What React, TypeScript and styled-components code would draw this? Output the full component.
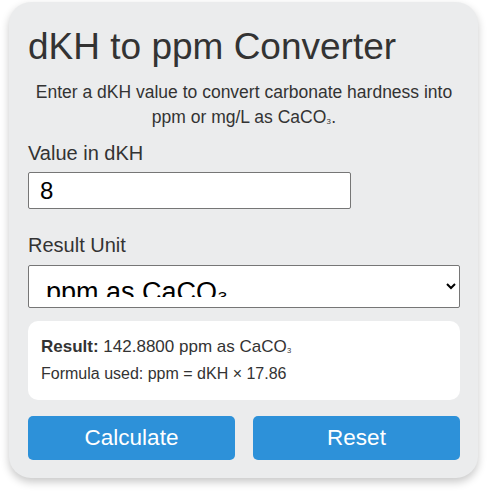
import React, { useState } from 'react';
import styled, { createGlobalStyle } from 'styled-components';

const GlobalStyle = createGlobalStyle`
    body {
        margin: 0;
        background: #ffffff;
        font-family: "Liberation Sans", Arial, sans-serif;
    }
`;

const Page = styled.div`
    padding: 2px 14px 13px 9px;
`;

const Card = styled.div`
    background: #ebeced;
    border-radius: 22px;
    box-shadow: 0 4px 8px rgba(0, 0, 0, 0.22);
    padding: 23px 18px 18px 19px;
    display: flex;
    flex-direction: column;
`;

const Title = styled.h1`
    margin: 0;
    font-size: 37px;
    font-weight: normal;
    color: #333333;
    line-height: 44px;
`;

const Intro = styled.p`
    margin: 11px 0 0;
    font-size: 17.5px;
    line-height: 25px;
    color: #333333;
    text-align: center;
`;

const Sub = styled.span`
    display: inline-block;
    font-size: 0.7em;
    line-height: 1;
`;

const Label = styled.label<{ $top: number }>`
    display: block;
    font-size: 20px;
    color: #333333;
    margin-top: ${({ $top }) => $top}px;
    line-height: 22px;
`;

const NumberInput = styled.input`
    box-sizing: border-box;
    width: 323px;
    height: 37px;
    margin-top: 8px;
    padding: 0 11px;
    font-family: "Liberation Sans", Arial, sans-serif;
    font-size: 24px;
    color: #000;
    border: 1px solid #767676;
    border-radius: 2px;
    background: #fff;
`;

const UnitSelect = styled.select`
    box-sizing: border-box;
    width: 100%;
    height: 43px;
    margin-top: 9px;
    padding: 10px 6px 10px 13px;
    font-family: "Liberation Sans", Arial, sans-serif;
    font-size: 27px;
    color: #000;
    border: 1px solid #767676;
    border-radius: 2px;
    background: #fff;
`;

const ResultBox = styled.div`
    margin-top: 13px;
    background: #ffffff;
    border-radius: 10px;
    padding: 12px 13px 13px;
    color: #333333;
`;

const ResultLine = styled.div<{ $size: number }>`
    font-size: ${({ $size }) => $size}px;
    line-height: 27px;
`;

const ButtonRow = styled.div`
    display: grid;
    grid-template-columns: 1fr 1fr;
    gap: 18px;
    margin-top: 16px;
`;

const ActionButton = styled.button`
    height: 44px;
    border: none;
    border-radius: 5px;
    background: #2d91d9;
    color: #ffffff;
    font-family: "Liberation Sans", Arial, sans-serif;
    font-size: 22.5px;
    cursor: pointer;
`;

const FACTOR = 17.86;

const App = () => {
    const [dkh, setDkh] = useState('8');
    const [unit, setUnit] = useState('ppm');
    const [result, setResult] = useState((8 * FACTOR).toFixed(4));

    const unitText = unit === 'ppm' ? 'ppm as CaCO' : 'mg/L as CaCO';

    const calculate = () => {
        const v = parseFloat(dkh);
        if (isNaN(v)) return;
        setResult((v * FACTOR).toFixed(4));
    };

    const reset = () => {
        setDkh('');
        setResult('');
    };

    return (
        <Page>
            <GlobalStyle />
            <Card>
                <Title>dKH to ppm Converter</Title>
                <Intro>Enter a dKH value to convert carbonate hardness into ppm or mg/L as CaCO<Sub>₃</Sub>.</Intro>
                <Label $top={12}>Value in dKH</Label>
                <NumberInput value={dkh} onChange={(e) => setDkh(e.target.value)} />
                <Label $top={25}>Result Unit</Label>
                <UnitSelect value={unit} onChange={(e) => setUnit(e.target.value)}>
                    <option value="ppm">ppm as CaCO₃</option>
                    <option value="mgl">mg/L as CaCO₃</option>
                </UnitSelect>
                <ResultBox>
                    <ResultLine $size={17}><b>Result:</b> {result} {unitText}<Sub>₃</Sub></ResultLine>
                    <ResultLine $size={16}>Formula used: ppm = dKH × 17.86</ResultLine>
                </ResultBox>
                <ButtonRow>
                    <ActionButton onClick={calculate}>Calculate</ActionButton>
                    <ActionButton onClick={reset}>Reset</ActionButton>
                </ButtonRow>
            </Card>
        </Page>
    );
};

export default App;
